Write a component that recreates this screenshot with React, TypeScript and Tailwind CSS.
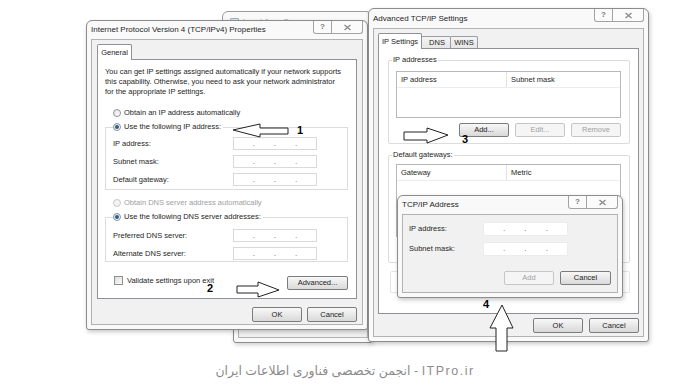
import type { ReactNode } from 'react'

function CaptionButtons() {
  return (
    <div className="mr-[4px] flex h-[13px]">
      <div className="flex w-[19px] items-center justify-center rounded-bl-[3px] border border-t-0 border-[#a3a3a3] bg-[#fbfbfb] text-[8px] font-bold leading-none text-[#7a7a7a]">
        ?
      </div>
      <div className="flex w-[31px] items-center justify-center rounded-br-[3px] border border-l-0 border-t-0 border-[#a3a3a3] bg-[#fbfbfb]">
        <svg width="9" height="7" viewBox="0 0 9 7">
          <path d="M1.5 1 L7.5 6 M7.5 1 L1.5 6" stroke="#8a8a8a" strokeWidth="1.3" fill="none" />
        </svg>
      </div>
    </div>
  )
}

function Frame({
  className,
  title,
  titleH = 'h-[18px]',
  children,
}: {
  className: string
  title: string
  titleH?: string
  children: ReactNode
}) {
  return (
    <div
      className={`absolute flex flex-col rounded-t-[6px] rounded-b-[3px] border border-[#8c8c8c] bg-[#f9f9f9] shadow-[1px_2px_4px_rgba(0,0,0,0.22)] ${className}`}
    >
      <div className={`flex shrink-0 items-start justify-between ${titleH}`}>
        <span className="flex h-full items-center pl-[4px] text-[8px] text-[#1e1e1e]">{title}</span>
        <CaptionButtons />
      </div>
      <div className="mx-[4px] mb-[4px] flex flex-1 flex-col border border-[#b2b2b2] bg-[#f1f1f1]">{children}</div>
    </div>
  )
}

function Radio({ on, dim }: { on?: boolean; dim?: boolean }) {
  return (
    <span
      className={`flex h-[8px] w-[8px] shrink-0 items-center justify-center rounded-full border ${
        dim ? 'border-[#c8c8c8] bg-[#f4f4f4]' : 'border-[#8d9297] bg-gradient-to-br from-[#e4e4e4] to-[#ffffff]'
      }`}
    >
      {on && <span className="h-[4px] w-[4px] rounded-full bg-[#2c5f8c]" />}
    </span>
  )
}

function Btn({ children, className, disabled }: { children?: ReactNode; className: string; disabled?: boolean }) {
  return (
    <div
      className={`flex items-center justify-center rounded-[2px] border text-[7.5px] ${
        disabled
          ? 'border-[#c4c6c8] bg-[#f5f5f5] text-[#a2a2a2]'
          : 'border-[#7c7c7c] bg-gradient-to-b from-[#f8f8f8] to-[#d9d9d9] text-[#222]'
      } ${className}`}
    >
      {children}
    </div>
  )
}

function IpBox({ className }: { className: string }) {
  return (
    <div className={`flex items-center justify-evenly bg-white text-[8px] leading-none text-[#555] ${className}`}>
      <span>.</span>
      <span>.</span>
      <span>.</span>
    </div>
  )
}

function IpRow({ label }: { label: string }) {
  return (
    <div className="flex h-[13px] items-center">
      <span className="w-[120px]">{label}</span>
      <IpBox className="h-[13px] w-[84px] border border-[#d9d9d9]" />
    </div>
  )
}

function Arrow({ className, w, h, points }: { className: string; w: number; h: number; points: string }) {
  return (
    <svg className={`absolute ${className}`} width={w} height={h} viewBox={`0 0 ${w} ${h}`}>
      <polygon points={points} fill="white" stroke="#222" strokeWidth="1" strokeLinejoin="miter" />
    </svg>
  )
}

function ListBox({ c1, c2, className }: { c1: string; c2: string; className: string }) {
  return (
    <div className={`flex flex-col border border-[#b8b8b8] bg-white ${className}`}>
      <div className="flex h-[16px] border-b border-[#ececec]">
        <div className="flex w-[110px] items-center border-r border-[#e2e2e2] pl-[4px]">{c1}</div>
        <div className="flex items-center pl-[4px]">{c2}</div>
      </div>
    </div>
  )
}

export default function App() {
  return (
    <div className="relative h-[392px] w-[678px] overflow-hidden bg-white font-['Liberation_Sans','DejaVu_Sans',sans-serif] text-[7.5px] text-[#1e1e1e]">
      {/* background windows */}
      <div className="absolute left-[222px] top-[11px] h-[300px] w-[150px] rounded-t-[6px] border border-[#9a9a9a] bg-[#f9f9f9]">
        <div className="flex items-center gap-[4px] pl-[7px] pt-[4px] text-[8px] text-[#a6a6a6]">
          <span className="h-[8px] w-[9px] shrink-0 rounded-[1px] border border-[#9db0c4] bg-[#dfe8f1]" />
          <span className="w-[66px] overflow-hidden whitespace-nowrap">Local Area Connection Status</span>
        </div>
      </div>
      <div className="absolute left-[233px] top-[40px] h-[303px] w-[140px] rounded-b-[3px] border border-[#8c8c8c] bg-[#f9f9f9] p-[4px] shadow-[1px_2px_4px_rgba(0,0,0,0.18)]">
        <div className="h-full border border-[#b2b2b2] bg-[#f1f1f1]" />
      </div>

      {/* IPv4 properties */}
      <Frame className="left-[86px] top-[20px] h-[310px] w-[282px]" title="Internet Protocol Version 4 (TCP/IPv4) Properties">
        <div className="flex flex-col px-[5px] pt-[4px]">
          <div className="flex h-[16px] items-end">
            <div className="relative z-10 flex h-[16px] w-[35px] items-center justify-center rounded-t-[2px] border border-b-0 border-[#8e9196] bg-white">
              General
            </div>
          </div>
          <div className="-mt-px flex h-[240px] flex-col border border-[#8e9196] bg-white">
            <p className="whitespace-nowrap pl-[7px] pt-[7px] leading-[10px]">
              You can get IP settings assigned automatically if your network supports
              <br />
              this capability. Otherwise, you need to ask your network administrator
              <br />
              for the appropriate IP settings.
            </p>
            <div className="mt-[9px] flex h-[14px] items-center gap-[3px] pl-[15px]">
              <Radio />
              <span>Obtain an IP address automatically</span>
            </div>
            <fieldset className="ml-[7px] mr-[8px] border border-[#dcdcdc] pb-[3px] pl-[7px] pt-[3px]">
              <legend className="flex h-[14px] items-center gap-[3px] pr-[2px]">
                <Radio on />
                <span>Use the following IP address:</span>
              </legend>
              <div className="flex flex-col gap-[5px]">
                <IpRow label="IP address:" />
                <IpRow label="Subnet mask:" />
                <IpRow label="Default gateway:" />
              </div>
            </fieldset>
            <div className="mt-[6px] flex h-[14px] items-center gap-[3px] pl-[15px] text-[#a0a0a0]">
              <Radio dim />
              <span>Obtain DNS server address automatically</span>
            </div>
            <fieldset className="ml-[7px] mr-[8px] border border-[#dcdcdc] pb-[1px] pl-[7px] pt-[5px]">
              <legend className="flex h-[14px] items-center gap-[3px] pr-[2px]">
                <Radio on />
                <span>Use the following DNS server addresses:</span>
              </legend>
              <div className="flex flex-col gap-[5px]">
                <IpRow label="Preferred DNS server:" />
                <IpRow label="Alternate DNS server:" />
              </div>
            </fieldset>
            <div className="mt-[13px] flex h-[15px] items-start justify-between pl-[16px] pr-[8px]">
              <div className="flex items-center gap-[4px]">
                <span className="h-[9px] w-[9px] border border-[#8f8f8f] bg-gradient-to-br from-[#dedede] to-[#fafafa]" />
                <span>Validate settings upon exit</span>
              </div>
              <Btn className="mt-px h-[14px] w-[61px]">Advanced...</Btn>
            </div>
          </div>
          <div className="mt-[8px] flex justify-end gap-[5px]">
            <Btn className="h-[15px] w-[50px]">OK</Btn>
            <Btn className="h-[15px] w-[50px]">Cancel</Btn>
          </div>
        </div>
      </Frame>

      {/* Advanced TCP/IP settings */}
      <Frame className="left-[368px] top-[8px] h-[334px] w-[281px]" title="Advanced TCP/IP Settings" titleH="h-[19px]">
        <div className="flex flex-col px-[4px] pt-[4px]">
          <div className="flex h-[16px] items-end">
            <div className="relative z-10 flex h-[16px] w-[44px] items-center justify-center rounded-t-[2px] border border-b-0 border-[#8e9196] bg-white">
              IP Settings
            </div>
            <div className="-ml-px flex h-[13px] w-[30px] items-center justify-center rounded-t-[2px] border border-b-0 border-[#9a9da2] bg-gradient-to-b from-[#f4f4f4] to-[#e4e4e4] pl-[2px]">
              DNS
            </div>
            <div className="-ml-px flex h-[13px] w-[28px] items-center justify-center rounded-t-[2px] border border-b-0 border-[#9a9da2] bg-gradient-to-b from-[#f4f4f4] to-[#e4e4e4]">
              WINS
            </div>
          </div>
          <div className="-mt-px flex h-[266px] flex-col border border-[#8e9196] bg-white">
            <fieldset className="ml-[9px] mr-[8px] mt-[6px] rounded-[2px] border border-[#dcdcdc] pb-[6px] pl-[3px] pr-[8px] pt-[6px]">
              <legend className="flex h-[10px] items-center px-[1px]">IP addresses</legend>
              <div className="ml-[4px] flex flex-col">
                <ListBox c1="IP address" c2="Subnet mask" className="h-[47px]" />
                <div className="mt-[5px] flex justify-end gap-[6px]">
                  <Btn className="h-[14px] w-[50px]">Add...</Btn>
                  <Btn disabled className="h-[14px] w-[50px]">Edit...</Btn>
                  <Btn disabled className="h-[14px] w-[50px]">Remove</Btn>
                </div>
              </div>
            </fieldset>
            <fieldset className="ml-[9px] mr-[8px] mt-[6px] rounded-[2px] border border-[#dcdcdc] pb-[6px] pl-[3px] pr-[8px] pt-[4px]">
              <legend className="flex h-[10px] items-center px-[1px]">Default gateways:</legend>
              <div className="ml-[4px] flex flex-col">
                <ListBox c1="Gateway" c2="Metric" className="h-[73px]" />
                <div className="mt-[5px] flex justify-end gap-[6px]">
                  <Btn disabled className="h-[14px] w-[50px]" />
                  <Btn disabled className="h-[14px] w-[50px]" />
                  <Btn disabled className="h-[14px] w-[50px]" />
                </div>
              </div>
            </fieldset>
            <div className="ml-[11px] mr-[8px] mt-[8px] h-[22px] rounded-[2px] border border-[#e4e4e4]" />
          </div>
          <div className="mt-[4px] flex justify-end gap-[6px]">
            <Btn className="h-[15px] w-[50px]">OK</Btn>
            <Btn className="h-[15px] w-[50px]">Cancel</Btn>
          </div>
        </div>
      </Frame>

      {/* TCP/IP Address */}
      <Frame className="left-[397px] top-[195px] h-[103px] w-[226px]" title="TCP/IP Address">
        <div className="flex flex-col px-[6px] pt-[7px]">
          <div className="flex flex-col gap-[6px]">
            <div className="flex h-[14px] items-center">
              <span className="w-[74px]">IP address:</span>
              <IpBox className="h-[14px] w-[85px] border border-[#ececec]" />
            </div>
            <div className="flex h-[14px] items-center">
              <span className="w-[74px]">Subnet mask:</span>
              <IpBox className="h-[14px] w-[85px] border border-[#ececec]" />
            </div>
          </div>
          <div className="mt-[15px] flex justify-end gap-[6px]">
            <Btn disabled className="h-[14px] w-[50px]">Add</Btn>
            <Btn className="h-[14px] w-[51px]">Cancel</Btn>
          </div>
        </div>
      </Frame>

      {/* annotations */}
      <Arrow className="left-[232px] top-[123px]" w={57} h={15} points="1,7 28,1 28,5 56,5 56,11 28,11 28,14" />
      <span className="absolute left-[297px] top-[125px] text-[11px] font-bold leading-none text-black">1</span>
      <Arrow className="left-[236px] top-[281px]" w={44} h={17} points="1,5 22,5 22,1 43,9 22,16 22,12 1,12" />
      <span className="absolute left-[207px] top-[283px] text-[11px] font-bold leading-none text-black">2</span>
      <Arrow className="left-[403px] top-[127px]" w={46} h={17} points="1,5 24,5 24,1 45,8 24,16 24,13 1,13" />
      <span className="absolute left-[462px] top-[134px] text-[11px] font-bold leading-none text-black">3</span>
      <Arrow className="left-[489px] top-[304px]" w={25} h={48} points="13,1 24,24 18,24 18,47 7,47 7,24 1,24" />
      <span className="absolute left-[483px] top-[299px] text-[11px] font-bold leading-none text-black">4</span>

      <div
        dir="rtl"
        className="absolute left-[210px] top-[365px] w-[270px] whitespace-nowrap text-center text-[12.5px] leading-none text-[#8c8c8c]"
      >
        <span className="tracking-[1.5px]">ITPro.ir</span> - انجمن تخصصی فناوری اطلاعات ایران
      </div>
    </div>
  )
}
